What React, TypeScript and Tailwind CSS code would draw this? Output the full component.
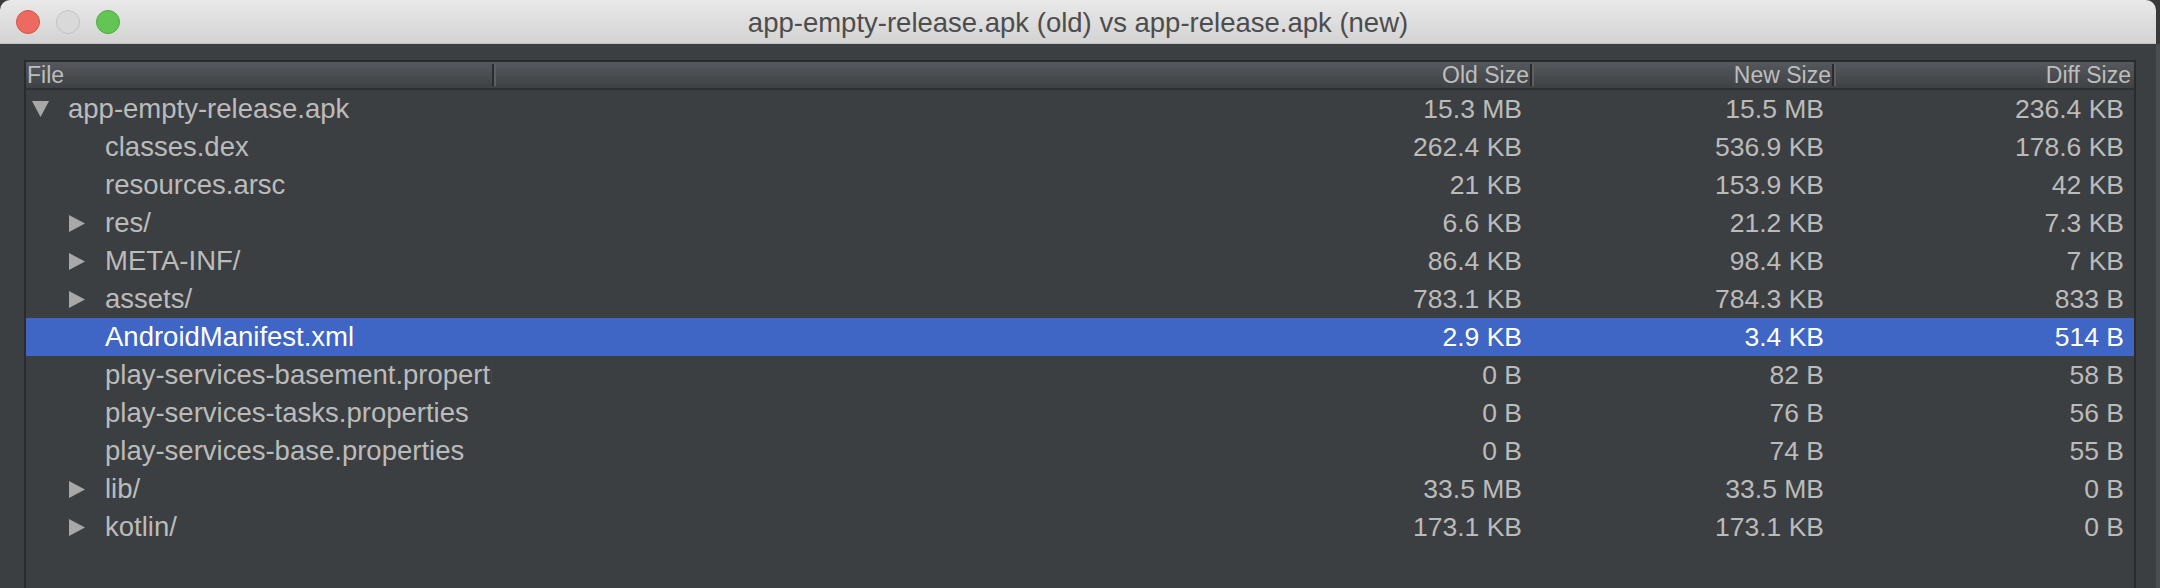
import React from 'react';

interface Entry {
  name: string;
  level: number;
  toggle?: 'open' | 'closed';
  oldSize: string;
  newSize: string;
  diffSize: string;
  selected?: boolean;
}

const ENTRIES: Entry[] = [
  { name: 'app-empty-release.apk', level: 0, toggle: 'open', oldSize: '15.3 MB', newSize: '15.5 MB', diffSize: '236.4 KB' },
  { name: 'classes.dex', level: 1, oldSize: '262.4 KB', newSize: '536.9 KB', diffSize: '178.6 KB' },
  { name: 'resources.arsc', level: 1, oldSize: '21 KB', newSize: '153.9 KB', diffSize: '42 KB' },
  { name: 'res/', level: 1, toggle: 'closed', oldSize: '6.6 KB', newSize: '21.2 KB', diffSize: '7.3 KB' },
  { name: 'META-INF/', level: 1, toggle: 'closed', oldSize: '86.4 KB', newSize: '98.4 KB', diffSize: '7 KB' },
  { name: 'assets/', level: 1, toggle: 'closed', oldSize: '783.1 KB', newSize: '784.3 KB', diffSize: '833 B' },
  { name: 'AndroidManifest.xml', level: 1, oldSize: '2.9 KB', newSize: '3.4 KB', diffSize: '514 B', selected: true },
  { name: 'play-services-basement.properties', level: 1, oldSize: '0 B', newSize: '82 B', diffSize: '58 B' },
  { name: 'play-services-tasks.properties', level: 1, oldSize: '0 B', newSize: '76 B', diffSize: '56 B' },
  { name: 'play-services-base.properties', level: 1, oldSize: '0 B', newSize: '74 B', diffSize: '55 B' },
  { name: 'lib/', level: 1, toggle: 'closed', oldSize: '33.5 MB', newSize: '33.5 MB', diffSize: '0 B' },
  { name: 'kotlin/', level: 1, toggle: 'closed', oldSize: '173.1 KB', newSize: '173.1 KB', diffSize: '0 B' },
];

const COLS = 'grid grid-cols-[470px_1038px_302px_298px]';

function Toggle({ state }: { state?: 'open' | 'closed' }) {
  if (!state) return null;
  if (state === 'open') {
    return (
      <svg width="17" height="16" viewBox="0 0 17 16" className="block">
        <polygon points="0,0 17,0 8.5,16" fill="#a8a8a8" />
      </svg>
    );
  }
  return (
    <svg width="16" height="17" viewBox="0 0 16 17" className="block">
      <polygon points="0,0 16,8.5 0,17" fill="#a8a8a8" />
    </svg>
  );
}

function HeaderCell({ label, align, padRight }: { label: string; align: 'left' | 'right'; padRight: string }) {
  return (
    <div className="flex items-stretch h-full">
      <div className={`flex-1 ${align === 'right' ? 'text-right' : 'text-left pl-[1px]'} ${padRight}`}>{label}</div>
      <div className="flex my-[2px]">
        <div className="w-[2px] bg-[#2a2b2c]" />
        <div className="w-[2px] bg-[#5c5f63]" />
      </div>
    </div>
  );
}

function Row({ entry }: { entry: Entry }) {
  const text = entry.selected ? 'text-white' : 'text-[#bbbbbb]';
  return (
    <div className={`${COLS} h-[38px] leading-[38px] ${entry.selected ? 'bg-[#3f65c5]' : ''} ${text}`}>
      <div className="w-[466px] overflow-hidden">
        <div className={`flex items-center whitespace-nowrap text-[27.5px] ${entry.level === 0 ? 'pl-[6px]' : 'pl-[43px]'}`}>
          <div className="w-[36px] h-[38px] shrink-0 flex items-center">
            <Toggle state={entry.toggle} />
          </div>
          <span className="shrink-0">{entry.name}</span>
        </div>
      </div>
      <div className="text-right pr-[12px] text-[26.5px]">{entry.oldSize}</div>
      <div className="text-right pr-[12px] text-[26.5px]">{entry.newSize}</div>
      <div className="text-right pr-[10px] text-[26.5px]">{entry.diffSize}</div>
    </div>
  );
}

export default function App() {
  return (
    <div className="w-[2160px] h-[588px] flex bg-[#3a3a3a] overflow-hidden font-['Liberation_Sans',sans-serif]">
      <div className="w-[2156px] flex flex-col">
        {/* Title bar */}
        <div className="h-[44px] rounded-t-[10px] bg-gradient-to-b from-[#e9e9e9] to-[#d3d3d3] border-b border-[#c0c0c0] grid grid-cols-[1fr_auto_1fr]">
          <div className="flex items-center gap-[16px] pl-[16px]">
            <span className="w-[24px] h-[24px] rounded-full bg-[#ec6a5f] border border-[#d2564b]" />
            <span className="w-[24px] h-[24px] rounded-full bg-[#d9d9d9] border border-[#c4c4c4]" />
            <span className="w-[24px] h-[24px] rounded-full bg-[#62c554] border border-[#4fab40]" />
          </div>
          <div className="pt-[3px] leading-[40px] text-[27.5px] text-[#4d4d4d] whitespace-nowrap">
            app-empty-release.apk (old) vs app-release.apk (new)
          </div>
          <div />
        </div>

        {/* Content */}
        <div className="flex-1 flex flex-col bg-[#3c3f41] pt-[16px] pl-[24px] pr-[20px]">
          <div className="flex-1 border-x-2 border-t-2 border-[#2b2b2b]">
            <div className={`${COLS} h-[28px] border-b-2 border-[#2e3032] bg-gradient-to-b from-[#55585c] to-[#3f4245] text-[23px] leading-[26px] text-[#bdbdbd]`}>
              <HeaderCell label="File" align="left" padRight="" />
              <HeaderCell label="Old Size" align="right" padRight="pr-[1px]" />
              <HeaderCell label="New Size" align="right" padRight="pr-[1px]" />
              <div className="text-right pr-[3px]">Diff Size</div>
            </div>
            {ENTRIES.map((entry) => (
              <Row key={entry.name} entry={entry} />
            ))}
          </div>
        </div>
      </div>
      <div className="flex-1 flex flex-col">
        <div className="h-[44px]" />
        <div className="flex-1 bg-[#4b4d4f]" />
      </div>
    </div>
  );
}
